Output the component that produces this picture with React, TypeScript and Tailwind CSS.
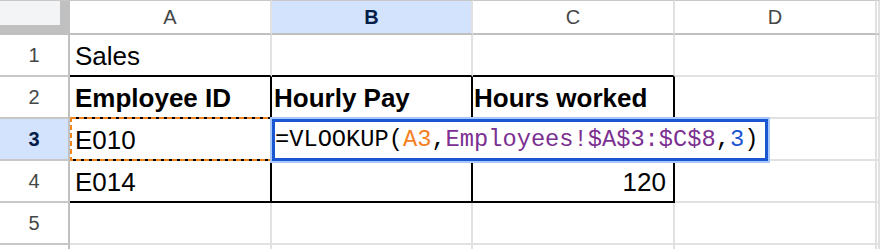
const COLS = ["A", "B", "C", "D", ""];
const ROWS = [1, 2, 3, 4, 5, 6];

// table A2:C4 has black borders
function rightBorder(row: number, col: number) {
  return row >= 2 && row <= 4 && col <= 2 ? "border-r-black" : "border-r-[#e1e1e1]";
}
function bottomBorder(row: number, col: number) {
  return row >= 1 && row <= 4 && col <= 2 ? "border-b-black" : "border-b-[#e1e1e1]";
}

function CellText({ row, col }: { row: number; col: number }) {
  if (row === 1 && col === 0) return <span className="pl-[5px] pb-[4px]">Sales</span>;
  if (row === 2 && col === 0) return <span className="pl-[5px] pb-[4px] font-bold">Employee ID</span>;
  if (row === 2 && col === 1) return <span className="pl-[2px] pb-[4px] font-bold">Hourly Pay</span>;
  if (row === 2 && col === 2) return <span className="pl-[1px] pb-[4px] font-bold">Hours worked</span>;
  if (row === 3 && col === 0) return <span className="pl-[5px] pb-[4px]">E010</span>;
  if (row === 4 && col === 0) return <span className="pl-[5px] pb-[4px]">E014</span>;
  if (row === 4 && col === 2) return <span className="ml-auto pr-[7px] pb-[4px]">120</span>;
  return null;
}

function Marquee() {
  return (
    <svg className="absolute left-0 -top-[2px] z-10 pointer-events-none" width="202" height="44">
      <rect x="1" y="1" width="200" height="42" fill="none" stroke="#f4861f" strokeWidth="2" strokeDasharray="5 3" />
    </svg>
  );
}

function Editor() {
  return (
    <div className="absolute left-0 top-0 z-20 w-[496px] h-[42px] bg-white border-[3px] border-[#1a55d2] shadow-[0_0_0_2px_#a8c7fa] flex items-center font-['Liberation_Mono',monospace] text-[23.7px] leading-none text-black whitespace-nowrap">
      <span>=VLOOKUP(</span>
      <span className="text-[#f4801f]">A3</span>
      <span>,</span>
      <span className="text-[#7b2f91]">Employees!$A$3:$C$8</span>
      <span>,</span>
      <span className="text-[#1a55d2]">3</span>
      <span>)</span>
    </div>
  );
}

export default function App() {
  return (
    <div className="w-[880px] h-[249px] overflow-hidden bg-white font-['Liberation_Sans',Arial,sans-serif]">
      <div className="grid grid-cols-[70px_202px_201px_202px_202px_3px]">
        {/* corner */}
        <div className="h-[35px] border-t border-t-[#c7c7c7] border-r-2 border-b-2 border-r-[#c0c0c0] border-b-[#c0c0c0] bg-[#c0c0c0]">
          <div className="w-[60px] h-[24px] bg-[#f3f4f5]" />
        </div>
        {COLS.map((c, i) => (
          <div
            key={c + i}
            className={`h-[35px] border-t border-t-[#c7c7c7] border-r-2 border-r-[#e1e1e1] border-b-2 border-b-[#c0c0c0] flex items-center justify-center text-[20px] ${
              i === 1 ? "bg-[#d3e3fd] font-bold text-[#041e49]" : "bg-white text-[#444746]"
            }`}
          >
            {c}
          </div>
        ))}

        {ROWS.map((r) => (
          <div key={r} className="contents">
            <div
              className={`h-[42px] border-r-2 border-r-[#c0c0c0] border-b-2 border-b-[#c7c7c7] flex items-center justify-center text-[20px] ${
                r === 3 ? "bg-[#d3e3fd] font-bold text-[#041e49]" : "bg-white text-[#444746]"
              }`}
            >
              {r < 6 ? r : null}
            </div>
            {COLS.map((_, ci) => (
              <div
                key={ci}
                className={`relative h-[42px] border-r-2 border-b-2 ${rightBorder(r, ci)} ${bottomBorder(r, ci)} flex items-end text-[26px] leading-[30px] text-black whitespace-nowrap`}
              >
                <CellText row={r} col={ci} />
                {r === 3 && ci === 0 && <Marquee />}
                {r === 3 && ci === 1 && <Editor />}
              </div>
            ))}
          </div>
        ))}
      </div>
    </div>
  );
}
